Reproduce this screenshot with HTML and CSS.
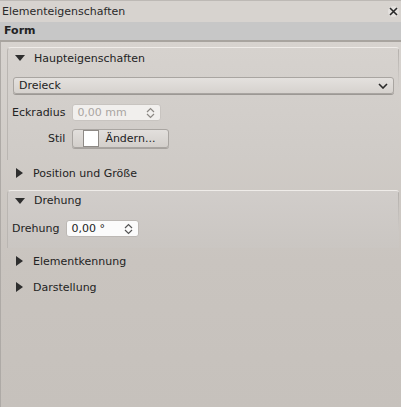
FILE: index.html
```html
<!DOCTYPE html>
<html>
<head>
<meta charset="utf-8">
<link rel="stylesheet" href="styles.css">
</head>
<body>
<div class="window">
  <div class="titlebar">
    <span>Elementeigenschaften</span>
    <span class="close"><svg width="9" height="9" viewBox="0 0 9 9"><path d="M1 1L8 8M8 1L1 8" stroke="#2a2a2a" stroke-width="1.6"/></svg></span>
  </div>
  <div class="formhead">Form</div>
  <div class="panel">
    <div class="group open first">
      <div class="ghead"><span class="tri down"></span><span>Haupteigenschaften</span></div>
      <div class="combo"><span>Dreieck</span><svg width="10" height="6" viewBox="0 0 10 6"><path d="M1 1L5 5L9 1" fill="none" stroke="#2a2a2a" stroke-width="1.6"/></svg></div>
      <div class="form">
        <label>Eckradius</label>
        <div class="spin disabled spin-wide"><span>0,00 mm</span><svg width="9" height="12" viewBox="0 0 9 12"><path d="M1 5L4.5 1.5L8 5M1 7L4.5 10.5L8 7" fill="none" stroke="#8a8682" stroke-width="1.2"/></svg></div>
        <label>Stil</label>
        <div class="button"><span class="swatch"></span><span>Ändern...</span></div>
      </div>
    </div>
    <div class="ghead row"><span class="tri right"></span><span>Position und Größe</span></div>
    <div class="group open second">
      <div class="ghead"><span class="tri down"></span><span>Drehung</span></div>
      <div class="form">
        <label>Drehung</label>
        <div class="spin spin-small"><span>0,00 °</span><svg width="9" height="12" viewBox="0 0 9 12"><path d="M1 5L4.5 1.5L8 5M1 7L4.5 10.5L8 7" fill="none" stroke="#555" stroke-width="1.2"/></svg></div>
      </div>
    </div>
    <div class="ghead row"><span class="tri right"></span><span>Elementkennung</span></div>
    <div class="ghead row"><span class="tri right"></span><span>Darstellung</span></div>
  </div>
</div>
</body>
</html>
```
FILE: styles.css
```css
html, body {
  margin: 0;
  padding: 0;
}
body {
  font-family: "DejaVu Sans", sans-serif;
  font-size: 11px;
  color: #232323;
  background: #c6c1bc;
}
.window {
  width: 401px;
  height: 407px;
  display: flex;
  flex-direction: column;
  overflow: hidden;
}
.titlebar {
  height: 21px;
  border-top: 1px solid #bdb9b5;
  background: #d7d3cf;
  display: flex;
  align-items: center;
  justify-content: space-between;
  padding-left: 2px;
  padding-right: 2px;
  color: #2a2a2a;
}
.close {
  width: 11px;
  height: 11px;
  border-radius: 50%;
  background: #e4e1de;
  display: flex;
  align-items: center;
  justify-content: center;
}
.formhead {
  height: 18px;
  line-height: 18px;
  background: #c7c7c7;
  font-weight: bold;
  padding-left: 4px;
  border-bottom: 2px solid #a8a49f;
  color: #222222;
}
.panel {
  flex: 1;
  background: linear-gradient(#d7d3cf, #c9c4bf 60%, #c6c1bc);
  border-left: 1px solid #aeaaa6;
  padding: 5px 2px 0 6px;
  display: flex;
  flex-direction: column;
}
.group {
  border-top: 1px solid #efece9;
  border-left: 1px solid #bab6b2;
  border-top-left-radius: 4px;
  border-top-right-radius: 3px;
  display: flex;
  flex-direction: column;
  background:
    linear-gradient(#b3afab, rgba(179, 175, 171, 0) 40px) right top / 1px 100% no-repeat,
    linear-gradient(#d6d2ce, #cfcbc7);
}
.group.first {
  padding-bottom: 12px;
}
.group.second {
  margin-top: 4px;
  padding-bottom: 11px;
  background:
    linear-gradient(#b3afab, rgba(179, 175, 171, 0) 40px) right top / 1px 100% no-repeat,
    linear-gradient(#d1cdca, #cac6c2);
}
.ghead {
  height: 20px;
  display: flex;
  align-items: center;
  padding-left: 7px;
}
.group.second .ghead {
  height: 19px;
}
.ghead.row {
  height: 26px;
  padding-left: 8px;
}
.tri {
  display: inline-block;
  width: 0;
  height: 0;
}
.tri.down {
  border-left: 5px solid transparent;
  border-right: 5px solid transparent;
  border-top: 6px solid #2e2e2e;
  margin-right: 9px;
}
.tri.right {
  border-top: 5px solid transparent;
  border-bottom: 5px solid transparent;
  border-left: 7px solid #2e2e2e;
  margin-right: 10px;
  margin-left: 1px;
}
.combo {
  margin: 9px 5px 0 5px;
  height: 15px;
  border: 1px solid #a9a5a1;
  border-radius: 3px;
  background: linear-gradient(#e4e1de, #d6d2ce);
  box-shadow: 0 1px 0 #9c9894;
  display: flex;
  align-items: center;
  justify-content: space-between;
  padding: 0 5px;
}
.form {
  display: grid;
  grid-template-columns: max-content auto;
  column-gap: 7px;
  row-gap: 8px;
  margin-top: 10px;
  justify-items: start;
  align-items: center;
  padding-left: 4px;
}
.form label {
  justify-self: end;
}
.spin {
  height: 15px;
  border: 1px solid #bcb8b4;
  border-radius: 3px;
  background: #fbfbfb;
  display: flex;
  align-items: center;
  justify-content: space-between;
  padding: 0 5px 0 4px;
}
.spin.disabled {
  background: #f1efed;
  color: #a9a5a1;
  border-color: #c8c4c0;
}
.spin-wide {
  width: 78px;
}
.spin-small {
  width: 62px;
}
.button {
  height: 17px;
  width: 95px;
  border: 1px solid #a9a5a1;
  border-radius: 3px;
  background: linear-gradient(#e2dfdc, #d3cfcb);
  box-shadow: 0 1px 0 #a6a29e;
  display: flex;
  align-items: center;
}
.swatch {
  width: 14px;
  height: 15px;
  background: #ffffff;
  border: 1px solid #8e8a86;
  margin-left: 10px;
  margin-right: 6px;
}
```
